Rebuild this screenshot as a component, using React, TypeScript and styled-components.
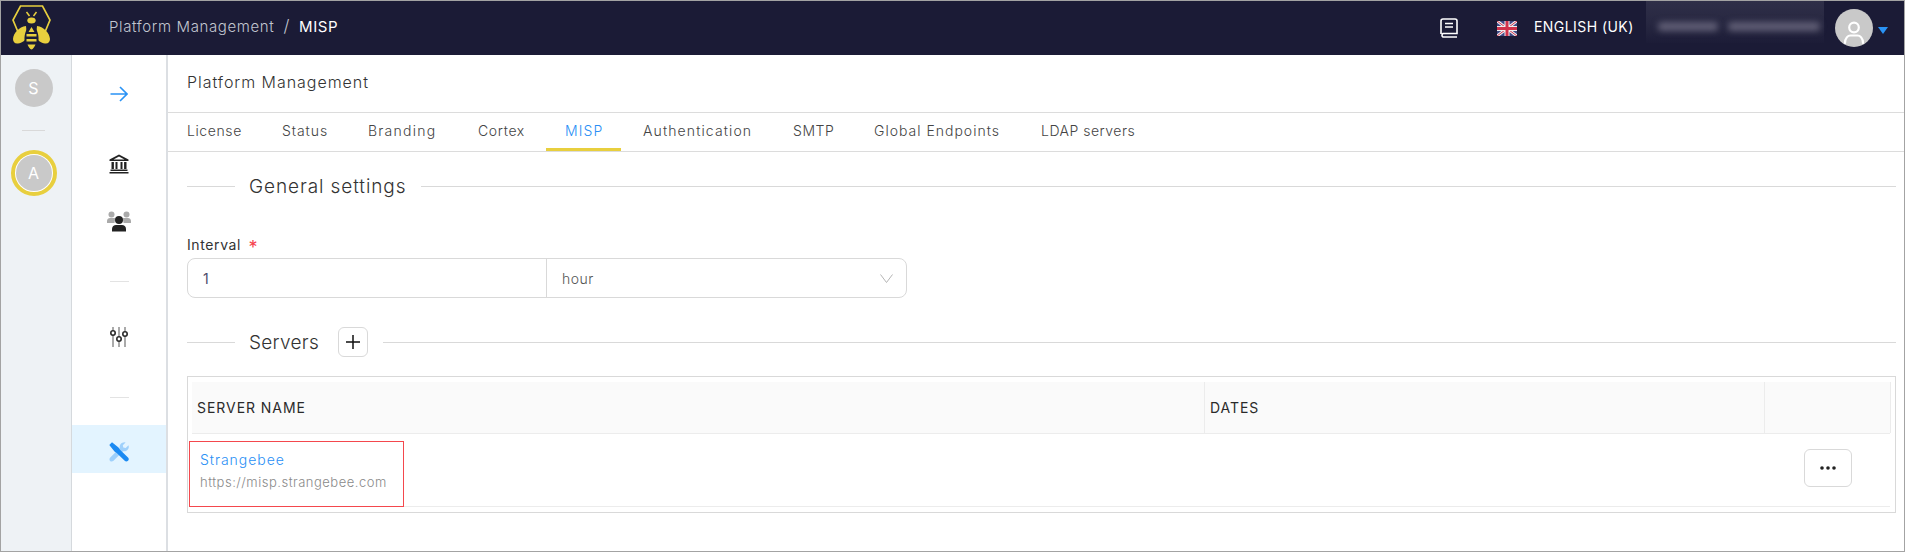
import React from "react";
import styled, { createGlobalStyle } from "styled-components";

const tabs = [
  { label: "License", width: 95, spacing: 0.6 },
  { label: "Status", width: 86, spacing: 0.94 },
  { label: "Branding", width: 110, spacing: 1.25 },
  { label: "Cortex", width: 87, spacing: 0.65 },
  { label: "MISP", width: 75, spacing: 1.1 },
  { label: "Authentication", width: 153, spacing: 1.12 },
  { label: "SMTP", width: 81, spacing: 0.55 },
  { label: "Global Endpoints", width: 167, spacing: 1.0 },
  { label: "LDAP servers", width: 150, spacing: 0.5 },
];

export default function App() {
  return (
    <Frame>
      <GlobalStyle />
      <TopBar>
        <LogoSlot>
          <BeeLogo />
        </LogoSlot>
        <Crumbs>
          <span>Platform Management</span>
          <CrumbSep>/</CrumbSep>
          <CrumbCurrent>MISP</CrumbCurrent>
        </Crumbs>
        <TopRight>
          <BookIcon />
          <Flag />
          <Lang>ENGLISH (UK)</Lang>
          <BlurredUser aria-hidden="true">
            <BlurBar $width={60} />
            <BlurBar $width={92} />
          </BlurredUser>
          <UserAvatar>
            <svg width="38" height="38" viewBox="0 0 38 38" fill="none" stroke="#fff" strokeWidth="2.2">
              <circle cx="19" cy="18.500" r="4.800" />
              <path d="M10 34c0-5 3-7.500 5.500-7.500h7c2.500 0 5.500 2.500 5.500 7.500" strokeLinecap="round" />
            </svg>
          </UserAvatar>
          <Caret />
        </TopRight>
      </TopBar>
      <Body>
        <Rail>
          <Letter>S</Letter>
          <RailLine />
          <Ring>
            <Letter>A</Letter>
          </Ring>
        </Rail>
        <Nav>
          <NavItem $top={15}>
            <svg width="18" height="16" viewBox="0 0 18 16" fill="none" stroke="#2a93f5" strokeWidth="1.6">
              <path d="M0.5 8H16.5M10 1l7 7-7 7" />
            </svg>
          </NavItem>
          <NavItem $top={22}>
            <BankIcon />
          </NavItem>
          <NavItem $top={9}>
            <UsersIcon />
          </NavItem>
          <NavLine $top={36} />
          <NavItem $top={31}>
            <SlidersIcon />
          </NavItem>
          <NavLine $top={36} />
          <NavItem $top={27} $active>
            <ToolsIcon />
          </NavItem>
        </Nav>
        <Main>
          <PageTitle>Platform Management</PageTitle>
          <TabBar>
            {tabs.map((t) => (
              <Tab
                key={t.label}
                $active={t.label === "MISP"}
                $wide={t.label === "Authentication"}
                style={{ width: t.width, letterSpacing: t.spacing }}
              >
                {t.label}
              </Tab>
            ))}
          </TabBar>
          <Panel>
            <SectionHead $top={19}>
              <SectionTitle $spacing={0.9}>General settings</SectionTitle>
              <Rule />
            </SectionHead>
            <FieldLabel>
              Interval <Star>*</Star>
            </FieldLabel>
            <InputGroup>
              <NumberBox>1</NumberBox>
              <UnitBox>
                hour
                <svg width="13" height="9" viewBox="0 0 13 9" fill="none" stroke="#b5b5b5" strokeWidth="1">
                  <path d="M0.5 0.5l6 8 6-8" />
                </svg>
              </UnitBox>
            </InputGroup>
            <SectionHead $top={29}>
              <SectionTitle $spacing={0.3}>Servers</SectionTitle>
              <PlusButton>
                <svg width="14" height="14" viewBox="0 0 14 14" stroke="#111" strokeWidth="1.5">
                  <path d="M7 0v14M0 7h14" />
                </svg>
              </PlusButton>
              <Rule />
            </SectionHead>
            <TableBox>
              <HeadRow>
                <HeadCell>SERVER NAME</HeadCell>
                <HeadCell>DATES</HeadCell>
                <HeadCell />
              </HeadRow>
              <DataRow>
                <NameCell>
                  <ServerName>Strangebee</ServerName>
                  <ServerUrl>https://misp.strangebee.com</ServerUrl>
                </NameCell>
                <div />
                <ActionCell>
                  <MoreButton>
                    <svg width="16" height="4" viewBox="0 0 16 4" fill="#222">
                      <circle cx="2" cy="2" r="1.8" />
                      <circle cx="8" cy="2" r="1.8" />
                      <circle cx="14" cy="2" r="1.8" />
                    </svg>
                  </MoreButton>
                </ActionCell>
                <Highlight />
              </DataRow>
            </TableBox>
          </Panel>
        </Main>
      </Body>
    </Frame>
  );
}

function BeeLogo() {
  return (
    <svg width="40" height="46" viewBox="0 0 40 46" fill="none">
      <path d="M6 27L1 15 8.500 1H30.500L38 15l-5 12" stroke="#e8cf3e" strokeWidth="1.7" />
      <path d="M14.500 7l3 4M24.500 7l-3 4" stroke="#e8cf3e" strokeWidth="1.5" />
      <ellipse cx="19.500" cy="15.500" rx="4.200" ry="3" fill="#e8cf3e" />
      <path d="M14 21C7 22 1.500 28 1 34c0 3 2 5 5 4.500 4-.5 8-3 9-7z" fill="#e8cf3e" />
      <path d="M25 21c7 1 12.500 7 13 13 0 3-2 5-5 4.500-4-.5-8-3-9-7z" fill="#e8cf3e" />
      <path d="M19.500 19.500c5 3 7.500 9 7 16-.5 5-4 9.500-7 9.500s-6.500-4.500-7-9.500c-.5-7 2-13 7-16z" fill="#1b1b36" />
      <path d="M19.500 22l3 5h-6zM14.500 29h10v2.500h-10zM14.500 34h10v2.500h-10zM15.500 39.500h8c-1 2-2.500 5-4 5s-3-3-4-5z" fill="#e8cf3e" />
    </svg>
  );
}

function BookIcon() {
  return (
    <svg width="18" height="20" viewBox="0 0 18 20" fill="none" stroke="#fff" strokeWidth="1.6">
      <path d="M1 16V3a2 2 0 0 1 2-2h12a2 2 0 0 1 2 2v12.500H3a2 2 0 0 0 0 3.500h14" />
      <path d="M5 5.500h8M5 9h8" />
    </svg>
  );
}

function Flag() {
  return (
    <FlagSvg width="20" height="15" viewBox="0 0 20 15">
      <rect width="20" height="15" fill="#3f4a86" />
      <path d="M0 0l20 15M20 0L0 15" stroke="#eee" strokeWidth="3" />
      <path d="M0 0l20 15M20 0L0 15" stroke="#d0324b" strokeWidth="1" />
      <path d="M10 0v15M0 7.500h20" stroke="#eee" strokeWidth="5" />
      <path d="M10 0v15M0 7.500h20" stroke="#d0324b" strokeWidth="3" />
    </FlagSvg>
  );
}

function BankIcon() {
  return (
    <svg width="20" height="20" viewBox="0 0 20 20" fill="#222">
      <path d="M10 0.500L19.500 5.500V7H0.500V5.500zM10 2.500L4.500 5.500H15.500z" fillRule="evenodd" />
      <path d="M2.500 8h2.400v7H2.500zM6.500 8h2v7h-2zM11.500 8h2v7h-2zM15.100 8h2.400v7h-2.400zM1.500 15.500h17V17h-17zM0.500 18h19v1.500H0.500z" />
    </svg>
  );
}

function UsersIcon() {
  return (
    <svg width="24" height="21" viewBox="0 0 24 21">
      <g fill="#aaa">
        <circle cx="4.500" cy="3.500" r="3" />
        <circle cx="19.500" cy="3.500" r="3" />
        <path d="M0 12V10c0-2 1.500-3 3-3h4c1 0 1.500.500 2 1-1 1-1.500 2.500-1.500 4zM24 12V10c0-2-1.500-3-3-3h-4c-1 0-1.500.500-2 1 1 1 1.500 2.500 1.500 4z" />
      </g>
      <circle cx="12" cy="9" r="4" fill="#222" />
      <path d="M5 20.500V18c0-2.500 2-4 4-4h6c2 0 4 1.500 4 4v2.500z" fill="#222" />
    </svg>
  );
}

function SlidersIcon() {
  return (
    <svg width="18" height="20" viewBox="0 0 18 20" fill="none">
      <path d="M3 0v20M9 0v20M15 0v20" stroke="#aaa" strokeWidth="2" />
      <g fill="#fff" stroke="#2b2b2b" strokeWidth="1.600">
        <circle cx="3" cy="6" r="2.200" />
        <circle cx="9" cy="12" r="2.200" />
        <circle cx="15" cy="7" r="2.200" />
      </g>
    </svg>
  );
}

function ToolsIcon() {
  return (
    <svg width="20" height="20" viewBox="0 0 20 20">
      <path d="M19.800 4.800c0 3-2.800 5.200-5.800 4.400L4.500 18.800c-1 1-2.600 1-3.400.2-.8-.8-.8-2.400.2-3.400L10.800 6c-.7-3 1.500-5.800 4.700-5.800l1.100.2-2.800 2.800.5 2.400 2.400.5 2.800-2.800z" fill="#9ed0fb" />
      <path d="M0.300 3L3 0.300l6.500 5.200 1.500 2.200 8 7.800c1 1 1 2.400 0 3.300-1 1-2.400 1-3.300 0L7.700 11 5.500 9.500z" fill="#1b8af2" />
    </svg>
  );
}

const GlobalStyle = createGlobalStyle`
  html, body {
    margin: 0;
    padding: 0;
    background: #fff;
  }
  * {
    box-sizing: border-box;
  }
`;

const Frame = styled.div`
  width: 1905px;
  height: 552px;
  border: 1px solid #a3a3a3;
  display: flex;
  flex-direction: column;
  overflow: hidden;
  font-family: Inter, "Open Sans", sans-serif;
  color: #333;
`;

const TopBar = styled.header`
  height: 54px;
  flex: none;
  background: #1b1b36;
  display: flex;
  align-items: center;
`;

const LogoSlot = styled.div`
  width: 108px;
  padding: 0 0 0 11px;
  display: flex;
`;

const Crumbs = styled.div`
  padding-bottom: 4px;
  font-size: 15px;
  font-weight: 300;
  letter-spacing: 0.63px;
  color: #c2c6d0;
  display: flex;
  align-items: center;
`;

const CrumbSep = styled.span`
  margin: 0 9px;
  font-size: 17px;
`;

const CrumbCurrent = styled.span`
  color: #fff;
  font-weight: 400;
`;

const TopRight = styled.div`
  margin-left: auto;
  display: flex;
  align-items: center;
  padding-right: 16px;
  height: 100%;
  svg {
    flex: none;
  }
`;

const FlagSvg = styled.svg`
  margin-left: 39px;
`;

const Lang = styled.span`
  margin-left: 17px;
  padding-bottom: 4px;
  width: 112px;
  font-size: 14px;
  letter-spacing: 0.44px;
  color: #fff;
  white-space: nowrap;
`;

const BlurredUser = styled.div`
  width: 178px;
  height: 42px;
  margin-top: -12px;
  padding: 8px 0 0 12px;
  display: flex;
  align-items: center;
  gap: 10px;
  background: linear-gradient(#2f2f48, #262640 60%, #1c1c37);
`;

const BlurBar = styled.i<{ $width: number }>`
  display: block;
  width: ${(p) => p.$width}px;
  height: 9px;
  border-radius: 4px;
  background: #5f5d74;
  filter: blur(3px);
`;

const UserAvatar = styled.div`
  width: 38px;
  height: 38px;
  margin-left: 11px;
  border-radius: 50%;
  background: #c9c9c9;
  overflow: hidden;
`;

const Caret = styled.i`
  width: 0;
  height: 0;
  margin: 4px 0 0 5px;
  border-left: 5px solid transparent;
  border-right: 5px solid transparent;
  border-top: 7px solid #2a93f5;
`;

const Body = styled.div`
  flex: 1;
  min-height: 0;
  display: flex;
`;

const Rail = styled.aside`
  width: 71px;
  flex: none;
  background: #eef2f5;
  border-right: 1px solid #d5d9dd;
  display: flex;
  flex-direction: column;
  align-items: center;
  padding: 14px 5px 0 0;
`;

const Letter = styled.div`
  width: 38px;
  height: 38px;
  flex: none;
  border-radius: 50%;
  background: #c9c9c9;
  color: #fff;
  font-size: 16px;
  display: flex;
  align-items: center;
  justify-content: center;
`;

const RailLine = styled.div`
  width: 23px;
  height: 1px;
  margin-top: 23px;
  background: #d9d9d9;
`;

const Ring = styled.div`
  width: 46px;
  height: 46px;
  margin-top: 19px;
  border-radius: 50%;
  border: 4px solid #e8cf3e;
  background: #fff;
  padding: 1px;
  display: flex;
  & > div {
    width: 100%;
    height: 100%;
  }
`;

const Nav = styled.nav`
  width: 96px;
  flex: none;
  border-right: 2px solid #dcdfe3;
  display: flex;
  flex-direction: column;
`;

const NavItem = styled.div<{ $top: number; $active?: boolean }>`
  height: 48px;
  flex: none;
  margin-top: ${(p) => p.$top}px;
  padding-top: ${(p) => (p.$active ? 6 : 0)}px;
  background: ${(p) => (p.$active ? "#e3f4ff" : "transparent")};
  display: flex;
  align-items: center;
  justify-content: center;
`;

const NavLine = styled.div<{ $top: number }>`
  width: 19px;
  height: 1px;
  flex: none;
  margin: ${(p) => p.$top}px 0 0 38px;
  background: #e3e3e3;
`;

const Main = styled.main`
  flex: 1;
  min-width: 0;
  display: flex;
  flex-direction: column;
`;

const PageTitle = styled.div`
  height: 58px;
  flex: none;
  padding: 0 19px 4px;
  border-bottom: 1px solid #dcdcdc;
  display: flex;
  align-items: center;
  font-size: 16px;
  font-weight: 300;
  letter-spacing: 0.96px;
  color: #333;
`;

const TabBar = styled.div`
  height: 39px;
  flex: none;
  border-bottom: 1px solid #dcdcdc;
  display: flex;
`;

const Tab = styled.div<{ $active?: boolean; $wide?: boolean }>`
  height: 38px;
  padding-left: ${(p) => (p.$wide ? 22 : 19)}px;
  display: flex;
  align-items: center;
  font-size: 14px;
  font-weight: 300;
  white-space: nowrap;
  color: ${(p) => (p.$active ? "#2a8ff5" : "#444")};
  border-bottom: 3px solid ${(p) => (p.$active ? "#e8cf3e" : "transparent")};
`;

const Panel = styled.div`
  padding: 0 8px 0 19px;
`;

const SectionHead = styled.div<{ $top: number }>`
  height: 30px;
  margin-top: ${(p) => p.$top}px;
  display: flex;
  align-items: center;
  &::before {
    content: "";
    width: 48px;
    height: 1px;
    background: #d9d9d9;
    flex: none;
  }
`;

const SectionTitle = styled.h3<{ $spacing: number }>`
  margin: 0 0 0 14px;
  font-size: 19px;
  font-weight: 300;
  letter-spacing: ${(p) => p.$spacing}px;
  color: #333;
  white-space: nowrap;
`;

const Rule = styled.div`
  flex: 1;
  height: 1px;
  margin-left: 15px;
  background: #d9d9d9;
`;

const FieldLabel = styled.label`
  display: block;
  height: 18px;
  margin-top: 35px;
  font-size: 14px;
  line-height: 18px;
  letter-spacing: 0.6px;
  color: #333;
`;

const Star = styled.span`
  margin-left: 3px;
  font-size: 18px;
  line-height: 18px;
  vertical-align: -4px;
  color: #f5424d;
`;

const InputGroup = styled.div`
  width: 720px;
  height: 40px;
  margin-top: 4px;
  border: 1px solid #d9d9d9;
  border-radius: 8px;
  display: flex;
  font-size: 14px;
`;

const NumberBox = styled.div`
  width: 359px;
  padding-left: 15px;
  border-right: 1px solid #d9d9d9;
  display: flex;
  align-items: center;
  color: #4d4a6a;
`;

const UnitBox = styled.div`
  flex: 1;
  padding: 0 13px 0 15px;
  display: flex;
  align-items: center;
  justify-content: space-between;
  font-weight: 300;
  letter-spacing: 0.5px;
  color: #555;
`;

const PlusButton = styled.button`
  width: 30px;
  height: 30px;
  flex: none;
  margin-left: 19px;
  padding: 0;
  background: #fff;
  border: 1px solid #d9d9d9;
  border-radius: 6px;
  display: flex;
  align-items: center;
  justify-content: center;
`;

const TableBox = styled.div`
  height: 137px;
  margin-top: 19px;
  padding: 5px 5px 6px 4px;
  border: 1px solid #d9d9d9;
`;

const HeadRow = styled.div`
  height: 52px;
  display: grid;
  grid-template-columns: 1013px 560px 126px;
  background: #fafafa;
  border-bottom: 1px solid #ececec;
`;

const HeadCell = styled.div`
  padding-left: 5px;
  border-right: 1px solid #ececec;
  display: flex;
  align-items: center;
  font-size: 14px;
  letter-spacing: 0.95px;
  color: #2a2a2a;
`;

const DataRow = styled.div`
  height: 73px;
  position: relative;
  display: grid;
  grid-template-columns: 1013px 560px 126px;
  border-bottom: 1px solid #ececec;
`;

const NameCell = styled.div`
  padding: 17px 0 0 8px;
`;

const ServerName = styled.div`
  font-size: 14px;
  line-height: 18px;
  letter-spacing: 0.96px;
  font-weight: 300;
  color: #2a8ff5;
`;

const ServerUrl = styled.div`
  margin-top: 4px;
  font-size: 13px;
  line-height: 18px;
  font-weight: 300;
  letter-spacing: 0.5px;
  color: #8a8a8a;
`;

const ActionCell = styled.div`
  padding-top: 15px;
  display: flex;
  justify-content: center;
`;

const MoreButton = styled.button`
  width: 48px;
  height: 38px;
  padding: 0;
  background: #fff;
  border: 1px solid #d9d9d9;
  border-radius: 6px;
  display: flex;
  align-items: center;
  justify-content: center;
`;

// red annotation box drawn on top of the first row
const Highlight = styled.div`
  position: absolute;
  left: -3px;
  top: 7px;
  width: 215px;
  height: 66px;
  border: 1px solid #f4484d;
`;
